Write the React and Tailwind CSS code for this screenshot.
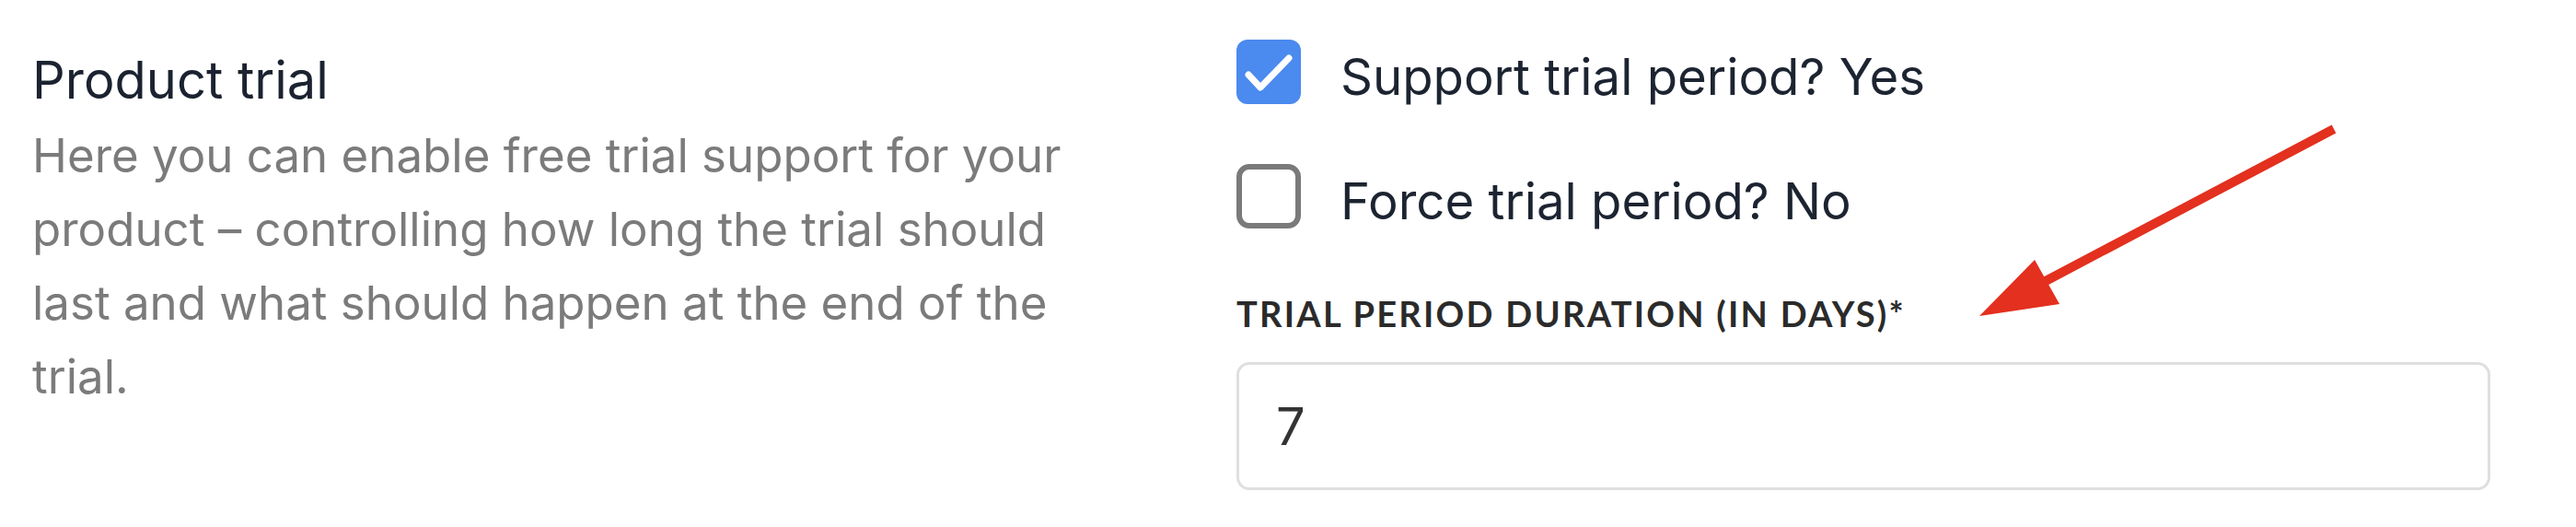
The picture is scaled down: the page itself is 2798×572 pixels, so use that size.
import React from 'react';

const Checkbox = ({ checked }) =>
    checked ? (
        <span className="flex h-[70px] w-[70px] shrink-0 items-center justify-center rounded-[12px] bg-[#4b8aee]">
            <svg viewBox="0 0 70 70" className="h-[70px] w-[70px]" fill="none" stroke="#fff" strokeWidth="7" strokeLinecap="round" strokeLinejoin="round">
                <path d="M13 38 L26 52 L57 20" />
            </svg>
        </span>
    ) : (
        <span className="h-[70px] w-[70px] shrink-0 rounded-[14px] border-[6px] border-[#7a7a7a] bg-white" />
    );

const ToggleRow = ({ checked, label, value }) => (
    <label className="flex items-start gap-[43px]">
        <Checkbox checked={checked} />
        <span className="text-[54.5px] leading-[80px] text-[#1d2431]">
            {label} {value}
        </span>
    </label>
);

export default function App() {
    return (
        <div className="relative h-[572px] w-[2798px] overflow-hidden bg-white font-['Inter',sans-serif]">
            <div className="flex pl-[35px]">
                {/* Section intro */}
                <section className="w-[1180px] pt-[53px]">
                    <h2 className="text-[56px] leading-[68px] text-[#1b2230]">Product trial</h2>
                    <p className="mt-2 text-[51px] leading-[80px] text-[#7b7b7b]">
                        Here you can enable free trial support for your product – controlling how long the trial should last and what should happen at the end of the trial.
                    </p>
                </section>

                {/* Trial settings */}
                <section className="ml-[128px] w-[1362px] pt-[43px]">
                    <div className="flex flex-col gap-[55px]">
                        <ToggleRow checked label="Support trial period?" value="Yes" />
                        <ToggleRow checked={false} label="Force trial period?" value="No" />
                    </div>
                    <label className="mt-[59px] block font-['Lato',sans-serif] text-[38px] font-bold uppercase leading-[46px] tracking-[0.06em] text-[#2b2b2b]">
                        Trial period duration (in days)*
                    </label>
                    <input
                        type="text"
                        defaultValue="7"
                        className="mt-[30px] h-[139px] w-full rounded-[14px] border-[3px] border-[#dfdfdf] px-[40px] text-[56px] text-[#333] outline-none"
                    />
                </section>
            </div>

            {/* Red pointer arrow */}
            <svg className="absolute left-[2130px] top-[125px]" width="420" height="230" viewBox="0 0 420 230">
                <line x1="405" y1="15" x2="92" y2="180" stroke="#e3301f" strokeWidth="10" />
                <polygon points="20,218 80,157 107,205" fill="#e3301f" />
            </svg>
        </div>
    );
}
